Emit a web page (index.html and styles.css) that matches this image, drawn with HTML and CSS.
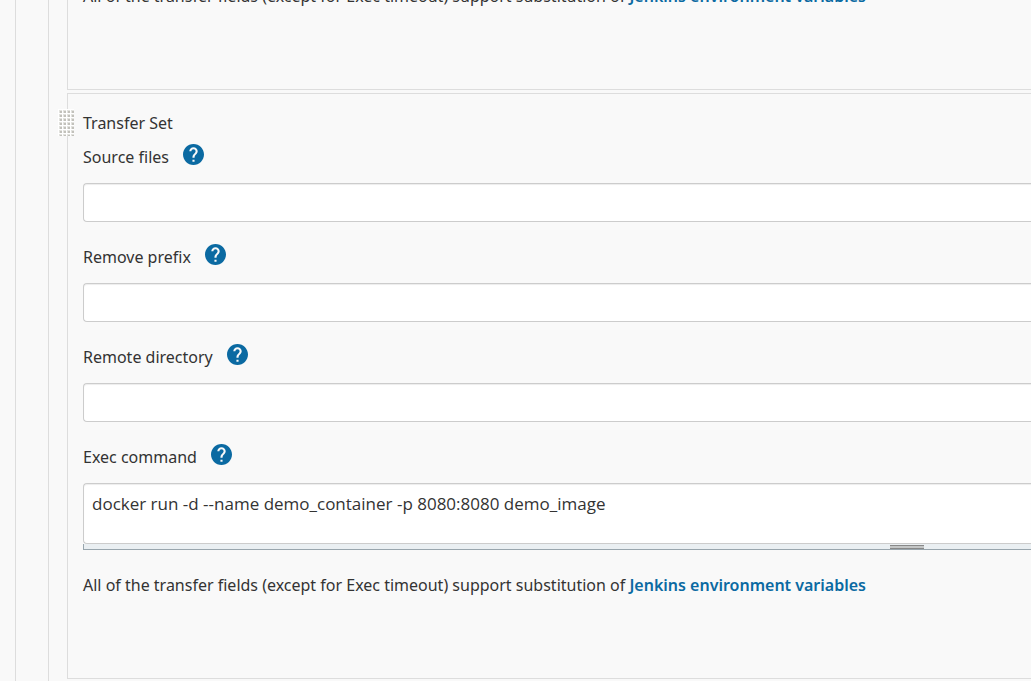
FILE: index.html
```html
<!DOCTYPE html>
<html lang="en">
<head>
<meta charset="utf-8">
<title>Transfer Set</title>
<link rel="stylesheet" href="styles.css">
</head>
<body>
<svg class="sprite" aria-hidden="true">
  <symbol id="help" viewBox="2 2 20 20">
    <path fill="currentColor" d="M12 2C6.480 2 2 6.480 2 12s4.480 10 10 10 10-4.480 10-10S17.520 2 12 2zm1 17h-2v-2h2v2zm2.070-7.750l-.9.920C13.450 12.900 13 13.500 13 15h-2v-.5c0-1.100.45-2.100 1.170-2.830l1.240-1.260c.37-.36.59-.86.59-1.410 0-1.100-.9-2-2-2s-2 .9-2 2H8c0-2.210 1.790-4 4-4s4 1.790 4 4c0 .88-.36 1.680-.93 2.250z"/>
  </symbol>
</svg>
<main class="outer">
  <div class="inner">
    <section class="panel panel-previous">
      <p class="note">All of the transfer fields (except for Exec timeout) support substitution of <a href="#variables">Jenkins environment variables</a></p>
    </section>
    <section class="panel">
      <svg class="grip" viewBox="0 0 16 28" aria-hidden="true">
        <defs>
          <pattern id="dots" width="4" height="4" patternUnits="userSpaceOnUse">
            <path fill="#e2e2de" d="M1 1h3v3H1z"/>
            <path fill="#c2c1bb" d="M2 2h2v2H2z"/>
          </pattern>
        </defs>
        <path fill="#fff" d="M0 0h16v27H0z"/>
        <path fill="url(#dots)" d="M0 0h16v27H0z"/>
      </svg>
      <h2 class="title">Transfer Set</h2>
      <div class="field">
        <div class="label-row">
          <label for="source">Source files</label>
          <button class="help" type="button" aria-label="Help for Source files"><svg><use href="#help"/></svg></button>
        </div>
        <input class="control" id="source" type="text">
      </div>
      <div class="field">
        <div class="label-row">
          <label for="prefix">Remove prefix</label>
          <button class="help" type="button" aria-label="Help for Remove prefix"><svg><use href="#help"/></svg></button>
        </div>
        <input class="control" id="prefix" type="text">
      </div>
      <div class="field">
        <div class="label-row">
          <label for="directory">Remote directory</label>
          <button class="help" type="button" aria-label="Help for Remote directory"><svg><use href="#help"/></svg></button>
        </div>
        <input class="control" id="directory" type="text">
      </div>
      <div class="field">
        <div class="label-row">
          <label for="command">Exec command</label>
          <button class="help" type="button" aria-label="Help for Exec command"><svg><use href="#help"/></svg></button>
        </div>
        <textarea class="control command" id="command" spellcheck="false">docker run -d --name demo_container -p 8080:8080 demo_image</textarea>
        <div class="resizer"><span class="resizer-handle"></span></div>
      </div>
      <p class="note">All of the transfer fields (except for Exec timeout) support substitution of <a href="#variables">Jenkins environment variables</a></p>
    </section>
  </div>
</main>
</body>
</html>
```
FILE: styles.css
```css
* {
  box-sizing: border-box;
}

body {
  margin: 0;
  overflow: hidden;
  background: #f9f9f9;
  color: #333;
  font: 16px/24px "Segoe UI", "Noto Sans", sans-serif;
}

.sprite {
  display: none;
}

.outer {
  min-height: 100vh;
  margin-left: 15px;
  border-left: 1px solid #ddd;
}

.inner {
  display: flex;
  flex-direction: column;
  gap: 3px;
  min-height: 100vh;
  margin-left: 32px;
  padding-left: 18px;
  border-left: 1px solid #ddd;
}

.panel {
  position: relative;
  padding: 17px 0 81px 15px;
  border: 1px solid #ddd;
  border-right: 0;
}

.panel-previous {
  margin-top: -16px;
  padding-top: 0;
  border-top: 0;
}

.grip {
  position: absolute;
  top: 15px;
  left: -10px;
  width: 16px;
  height: 28px;
}

.title {
  margin: 0 0 10px;
  font-size: 16px;
  font-weight: 400;
}

.field {
  margin-bottom: 23px;
}

.label-row {
  display: flex;
  align-items: flex-start;
  gap: 14px;
  height: 24px;
  margin-bottom: 14px;
}

.help {
  display: flex;
  margin-top: -1px;
  padding: 0;
  border: 0;
  background: none;
  color: #0b6aa2;
  cursor: pointer;
}

.help svg {
  width: 21px;
  height: 21px;
}

.control {
  display: block;
  width: 100%;
  height: 39px;
  margin: 0;
  padding: 8px;
  border: 1px solid #ccc;
  border-right: 0;
  border-radius: 4px 0 0 4px;
  background: #fff;
  box-shadow: inset 0 1px 1px rgba(0, 0, 0, 0.075);
  color: #333;
  font: 17px/24px "Segoe UI", "Open Sans", sans-serif;
}

.command {
  height: 61px;
  overflow: hidden;
  resize: none;
}

.resizer {
  display: flex;
  justify-content: flex-end;
  height: 6px;
  padding: 1px 107px 0 0;
  border-bottom: 1px solid #98a5ad;
  border-left: 1px solid #98a5ad;
  background: #eaeff2;
}

.resizer-handle {
  width: 34px;
  height: 4px;
  border-top: 1px solid #888;
  border-bottom: 1px solid #888;
  background: #c4c6c6;
}

.note {
  margin: 0;
}

.note a {
  color: #0b6aa2;
  font-weight: 600;
  text-decoration: none;
}
```
